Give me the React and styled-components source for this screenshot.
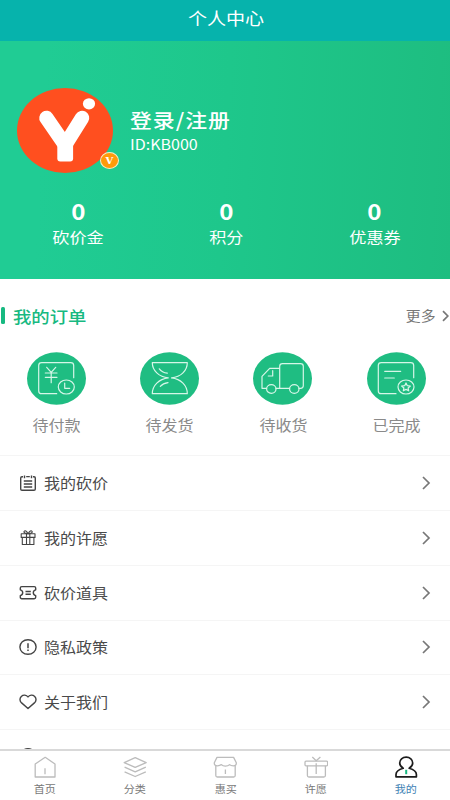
import React from 'react';
import styled, { createGlobalStyle } from 'styled-components';

const GlobalStyle = createGlobalStyle`
  * {
    box-sizing: border-box;
  }

  body {
    margin: 0;
    background: #fff;
    font-family: 'Noto Sans CJK SC', 'Noto Sans', sans-serif;
  }
`;

const Screen = styled.div`
  width: 450px;
  height: 800px;
  display: flex;
  flex-direction: column;
  overflow: hidden;
  background: #fff;
`;

// wide lettering used all over the page
const Text = styled.span`
  display: inline-block;
  white-space: nowrap;
  font-size: ${({ $size }) => $size}px;
  font-weight: ${({ $weight }) => $weight || 400};
  line-height: ${({ $line }) => $line || 20}px;
  color: ${({ $color }) => $color || '#fff'};
  letter-spacing: ${({ $spacing }) => $spacing || 0}px;
  transform: scaleX(1.12);
  transform-origin: ${({ $origin }) => $origin || 'center'};
`;

const Header = styled.header`
  height: 41px;
  flex-shrink: 0;
  display: flex;
  justify-content: center;
  padding: 8px 0 0 2px;
  background: #06b3ac;
`;

const Profile = styled.section`
  height: 238px;
  flex-shrink: 0;
  background: linear-gradient(93deg, #20cc94 10%, #1ec78b 50%, #1ebd80 100%);
`;

const User = styled.div`
  display: flex;
  height: 132px;
  padding: 47px 0 0 17px;
`;

const AvatarWrap = styled.div`
  position: relative;
  width: 96px;
  height: 85px;
`;

const VipBadge = styled.span`
  position: absolute;
  left: 83px;
  top: 64px;
  width: 19px;
  height: 17px;
  display: flex;
  align-items: center;
  justify-content: center;
  border: 1.5px solid #f6ecc8;
  border-radius: 50%;
  background: #ff9a0a;
  color: #fff;
  font: bold 10px/12px 'DejaVu Serif', serif;
`;

const UserInfo = styled.div`
  display: flex;
  flex-direction: column;
  align-items: flex-start;
  padding: 20px 0 0 17px;
`;

const Stats = styled.div`
  display: grid;
  grid-template-columns: repeat(3, 148.3px);
  padding: 26px 0 0 4px;
`;

const Stat = styled.div`
  display: flex;
  flex-direction: column;
  align-items: center;
  gap: 1px;
`;

const OrdersHead = styled.div`
  height: 73px;
  flex-shrink: 0;
  display: flex;
  align-items: center;
  padding: 0 1px;
`;

const Marker = styled.i`
  width: 4px;
  height: 17px;
  margin-right: 8px;
  border-radius: 1.5px;
  background: #17b981;
`;

const More = styled.div`
  display: flex;
  align-items: center;
  gap: 6px;
  margin-left: auto;
`;

const Orders = styled.div`
  height: 103px;
  flex-shrink: 0;
  display: grid;
  grid-template-columns: repeat(4, 113.2px);
`;

const Order = styled.div`
  display: flex;
  flex-direction: column;
  align-items: center;
  gap: 10px;
`;

const OrderIcon = styled.svg`
  width: 59px;
  height: 53px;
  fill: none;
  stroke: #d6f6e8;
  stroke-width: 1.2;
  stroke-linejoin: round;
  stroke-linecap: round;
`;

const Menu = styled.div`
  height: 294px;
  flex-shrink: 0;
  overflow: hidden;
`;

const MenuRow = styled.div`
  height: 54.85px;
  display: flex;
  align-items: center;
  padding: 0 19px;
  border-top: 1.5px solid #f5f5f5;
`;

const MenuIcon = styled.svg`
  width: 18px;
  height: 18px;
  margin-right: 7px;
  fill: none;
  stroke: #444;
  stroke-width: ${({ $thin }) => ($thin ? 1.1 : 1.4)};
  stroke-linejoin: round;
`;

const Arrow = styled.svg`
  width: ${({ $w }) => $w}px;
  height: ${({ $h }) => $h}px;
  margin-left: auto;
  fill: none;
  stroke: #777;
  stroke-width: 1.7;
`;

const TabBar = styled.nav`
  height: 51px;
  flex-shrink: 0;
  display: grid;
  grid-template-columns: repeat(5, 90.2px);
  border-top: 2px solid #d9d9d9;
  background: #fff;
`;

const Tab = styled.div`
  display: flex;
  flex-direction: column;
  align-items: center;
  padding-top: 5px;
  gap: 3px;
`;

const TabIcon = styled.svg`
  width: 24px;
  height: 22px;
  fill: none;
  stroke: ${({ $active }) => ($active ? '#1c1c1c' : '#bcbcbc')};
  stroke-width: ${({ $active }) => ($active ? 1.7 : 1.3)};
  stroke-linejoin: round;
`;

const Avatar = () => (
  <AvatarWrap>
    <svg width="96" height="85" viewBox="0 0 96 85" display="block">
      <ellipse cx="48" cy="42.5" rx="48" ry="42.5" fill="#ff4f1f" />
      <g stroke="#fff" strokeWidth="14.5" strokeLinecap="round">
        <line x1="29.5" y1="30" x2="46" y2="54" />
        <line x1="65" y1="30" x2="50" y2="54" />
      </g>
      <rect x="40.3" y="47" width="15.8" height="26.5" rx="3" fill="#fff" />
      <ellipse cx="72" cy="15.8" rx="6.1" ry="5.6" fill="#fff" />
    </svg>
    <VipBadge>V</VipBadge>
  </AvatarWrap>
);

const stats = [
  { label: '砍价金', value: 0 },
  { label: '积分', value: 0 },
  { label: '优惠券', value: 0 },
];

const orders = [
  {
    label: '待付款',
    icon: (
      <>
        <path d="M46.7 25.7V13.5Q46.7 10.7 43.7 10.7H14.7Q11.7 10.7 11.7 13.5V38.9Q11.7 41.7 14.7 41.7H29.7" />
        <path d="M19.7 15.3L24.2 20.3L28.7 15.3M18.3 21H30M18.3 25.3H30M24.2 20.3V30.7" />
        <ellipse cx="39.3" cy="35" rx="8" ry="7" />
        <path d="M37.7 31V36.3H42.7" />
      </>
    ),
  },
  {
    label: '待发货',
    icon: (
      <>
        <path d="M12.3 10.7H47.3C47.3 18.5 41 25 31.5 25.9C41 27 47.3 33.5 47.3 41.7H12.3C12.3 33.5 19 27 28.3 25.9C19 25 12.3 18.5 12.3 10.7Z" />
        <path d="M19.3 16.8Q22 20.5 27.3 21.2M20.3 34.3Q23 31.2 28 30.6" />
      </>
    ),
  },
  {
    label: '待收货',
    icon: (
      <>
        <path d="M13.6 36.3H9V24.3L16.7 16.3H26.7M23 36.3H36.6M46 36.3H47.5Q50.3 36.3 50.3 33.8V14.2Q50.3 11.7 47.5 11.7H29.5Q26.7 11.7 26.7 14.2V36.3" />
        <path d="M19.7 18.7V24H15.3" />
        <ellipse cx="18.3" cy="37" rx="4.7" ry="4.3" />
        <ellipse cx="41.3" cy="37" rx="4.7" ry="4.3" />
      </>
    ),
  },
  {
    label: '已完成',
    icon: (
      <>
        <path d="M46.7 25.7V13.5Q46.7 10.7 43.7 10.7H14.3Q11.3 10.7 11.3 13.5V38.9Q11.3 41.7 14.3 41.7H29" />
        <path d="M17.7 19.3H33.7M17.7 26H27.3" />
        <ellipse cx="39" cy="35" rx="8" ry="7" />
        <path d="M39 31L40.3 33.7L43.4 34L41.1 36L41.7 38.8L39 37.4L36.3 38.8L36.9 36L34.6 34L37.7 33.7Z" />
      </>
    ),
  },
];

const menu = [
  {
    label: '我的砍价',
    icon: (
      <>
        <path d="M4 2.8H3Q1.7 2.8 1.7 4.1V15Q1.7 16.3 3 16.3H15Q16.3 16.3 16.3 15V4.1Q16.3 2.8 15 2.8H14M7.2 2.6H10.8" />
        <path d="M5.5 1.6V4.2M12.5 1.6V4.2" />
        <path d="M4.8 7H13.2M4.8 10H13.2M4.8 13H13.2" strokeWidth="1.3" />
      </>
    ),
  },
  {
    label: '我的许愿',
    thin: true,
    icon: (
      <>
        <rect x="2.2" y="4.8" width="13.8" height="3.6" />
        <path d="M3.3 8.4V15.5H14.9V8.4M7.5 4.8V15.5M10.8 4.8V15.5" />
        <path d="M9.1 4.8Q4.6 4.5 5 2.5Q6.6 .2 9.1 4.8Q11.6 .2 13.2 2.5Q13.6 4.5 9.1 4.8" />
      </>
    ),
  },
  {
    label: '砍价道具',
    icon: (
      <>
        <path d="M2.8 2.6H15.2Q16.7 2.6 16.7 4V5.8C13.5 6.8 13.5 10.6 16.7 11.6V13.3Q16.7 14.7 15.2 14.7H2.8Q1.3 14.7 1.3 13.3V11.6C4.5 10.6 4.5 6.8 1.3 5.8V4Q1.3 2.6 2.8 2.6Z" />
        <path d="M6.5 7.5H11.8M6.5 10.2H11.8" />
      </>
    ),
  },
  {
    label: '隐私政策',
    icon: (
      <>
        <ellipse cx="9" cy="9" rx="8.1" ry="7.3" />
        <path d="M9 5.2V10.2M9 11.4V12.9" strokeWidth="1.5" />
      </>
    ),
  },
  {
    label: '关于我们',
    icon: (
      <path d="M9 4C7.5 1.6 4.2 1.6 2.3 3.4C.4 5.4 .6 8 2.6 9.9L9 15.5L15.4 9.9C17.4 8 17.6 5.4 15.7 3.4C13.8 1.6 10.5 1.6 9 4Z" />
    ),
  },
  {
    label: '',
    icon: <ellipse cx="9" cy="8.2" rx="8.1" ry="7.4" />,
  },
];

const tabs = [
  {
    label: '首页',
    icon: <path d="M12.2 1.3L2.2 8V21H22V8ZM12 12.3V18.3" />,
  },
  {
    label: '分类',
    icon: (
      <>
        <path d="M12.2 1.7L23.2 6.6L12.2 11.4L1.2 6.6Z" />
        <path d="M1.6 11.2L12.2 15.9L22.8 11.2M1.6 15.8L12.2 20.5L22.8 15.8" />
      </>
    ),
  },
  {
    label: '惠买',
    icon: (
      <>
        <path d="M2.8 9.6V19.5Q2.8 21 4.3 21H20.7Q22.2 21 22.2 19.5V9.6M12.4 13.5V18" />
        <path d="M4 1.4H20.6L23.3 6.8Q23.6 9.6 20.4 9.8Q17.8 9.8 16.6 8.6Q15 10.2 12.4 10.2Q9.8 10.2 8.4 8.6Q7 9.8 4.4 9.8Q1 9.6 1.3 6.8Z" />
      </>
    ),
  },
  {
    label: '许愿',
    icon: (
      <>
        <rect x="1" y="5.2" width="22.6" height="4.6" rx="1" />
        <path d="M3.4 9.8V19.5Q3.4 21 4.9 21H19.9Q21.4 21 21.4 19.5V9.8M8.3 1L12.2 4.7L16.4 1M12.2 7.3V18" />
      </>
    ),
  },
  {
    label: '我的',
    active: true,
    icon: (
      <>
        <path d="M9.2 12.3C7 11 5.7 9.2 5.7 7.1C5.7 3.8 8.5 1.2 12.2 1.2C15.9 1.2 18.7 3.8 18.7 7.1C18.7 9.2 17.4 11 15.2 12.3C19.4 13.5 22.4 15.8 22.4 18.6V20.8H2V18.6C2 15.8 5 13.5 9.2 12.3Z" />
        <path d="M12.2 13.8V18.2" stroke="#17b981" strokeWidth="2" />
      </>
    ),
  },
];

const App = () => {
  return (
    <>
      <GlobalStyle />
      <Screen>
        <Header>
          <Text $size={17}>个人中心</Text>
        </Header>

        <Profile>
          <User>
            <Avatar />
            <UserInfo>
              <Text $size={19.5} $weight={500} $line={24} $spacing={0.9} $origin="left">
                登录/注册
              </Text>
              <Text $size={14.3} $line={23} $origin="left">ID:KB000</Text>
            </UserInfo>
          </User>
          <Stats>
            {stats.map((stat) => (
              <Stat key={stat.label}>
                <Text $size={21.5} $weight={700} $line={24}>{stat.value}</Text>
                <Text $size={15.3} $line={24}>{stat.label}</Text>
              </Stat>
            ))}
          </Stats>
        </Profile>

        <OrdersHead>
          <Marker />
          <Text $size={16.4} $weight={500} $color="#17b981" $origin="left">我的订单</Text>
          <More>
            <Text $size={13.3} $color="#777" $origin="right">更多</Text>
            <Arrow $w={7} $h={12} viewBox="0 0 7 12">
              <path d="M1 1.2L5.8 6L1 10.8" />
            </Arrow>
          </More>
        </OrdersHead>

        <Orders>
          {orders.map((order) => (
            <Order key={order.label}>
              <OrderIcon viewBox="0 0 59 53">
                <ellipse cx="29.5" cy="26.5" rx="29.5" ry="26.3" fill="#1fbd82" stroke="none" />
                {order.icon}
              </OrderIcon>
              <Text $size={14.3} $color="#8a8a8a">{order.label}</Text>
            </Order>
          ))}
        </Orders>

        <Menu>
          {menu.map((item, i) => (
            <MenuRow key={i}>
              <MenuIcon viewBox="0 0 18 18" $thin={item.thin}>{item.icon}</MenuIcon>
              {item.label && (
                <Text $size={14.3} $color="#4a4a4a" $origin="left">{item.label}</Text>
              )}
              <Arrow $w={9} $h={14} viewBox="0 0 9 14">
                <path d="M1 1L7 7L1 13" />
              </Arrow>
            </MenuRow>
          ))}
        </Menu>

        <TabBar>
          {tabs.map((tab) => (
            <Tab key={tab.label}>
              <TabIcon viewBox="0 0 24 22" $active={tab.active}>{tab.icon}</TabIcon>
              <Text $size={9.9} $line={16} $color={tab.active ? '#3f83b5' : '#777'}>
                {tab.label}
              </Text>
            </Tab>
          ))}
        </TabBar>
      </Screen>
    </>
  );
};

export default App;
